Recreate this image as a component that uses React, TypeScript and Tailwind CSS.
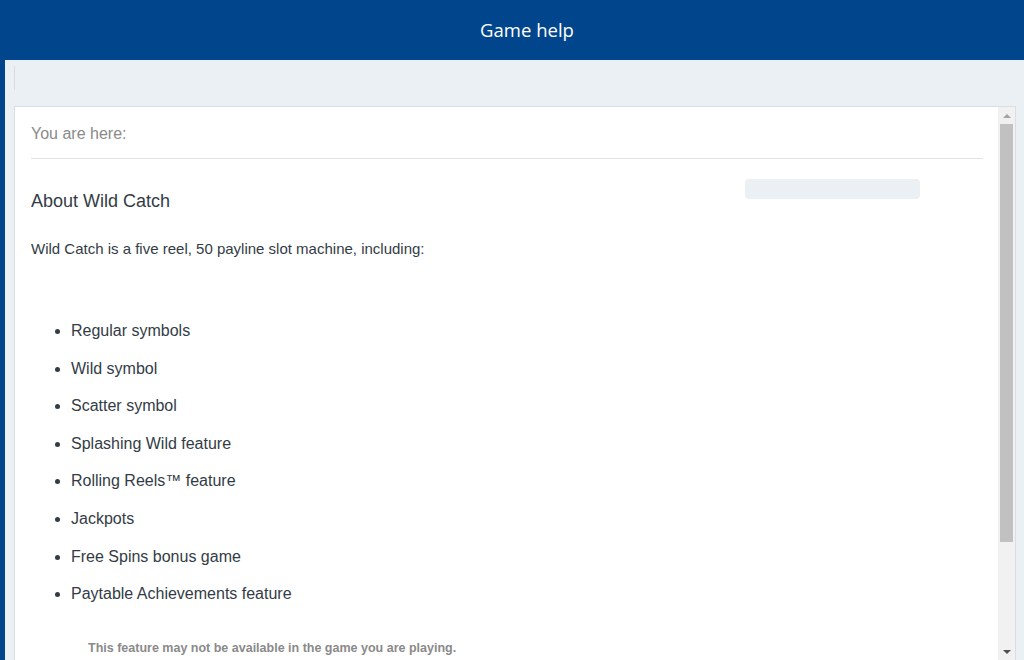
const features = [
  'Regular symbols',
  'Wild symbol',
  'Scatter symbol',
  'Splashing Wild feature',
  'Rolling Reels™ feature',
  'Jackpots',
  'Free Spins bonus game',
  'Paytable Achievements feature',
];

function Scrollbar() {
  return (
    <div className="flex w-[17px] shrink-0 flex-col bg-[#f1f1f1]">
      <div className="flex h-[17px] items-center justify-center">
        <div className="h-0 w-0 border-x-[4px] border-b-[4px] border-x-transparent border-b-[#a3a3a3]" />
      </div>
      <div className="mx-[2px] h-[418px] bg-[#c1c1c1]" />
      <div className="flex-1" />
      <div className="flex h-[17px] items-center justify-center">
        <div className="h-0 w-0 border-x-[4px] border-t-[4px] border-x-transparent border-t-[#505050]" />
      </div>
    </div>
  );
}

export default function App() {
  return (
    <div className="flex h-[660px] w-[1024px] flex-col overflow-hidden font-['Liberation_Sans',Arial,sans-serif]">
      <header className="flex h-[60px] shrink-0 items-center justify-center bg-[#01468c] pl-[30px]">
        <h1 className="font-['Open_Sans',sans-serif] text-[18.5px] text-white">Game help</h1>
      </header>
      <div className="flex flex-1 min-h-0">
        <div className="w-[5px] shrink-0 bg-[#01468c]" />
        <div className="flex min-w-0 flex-1 flex-col bg-[#ebf0f4] pl-[9px] pr-[8px]">
          <div className="h-[46px] shrink-0 pt-[6px]">
            <div className="h-[24px] w-px bg-[#d9dde0]" />
          </div>
          <div className="flex min-h-0 flex-1 border-l border-t border-r border-[#dadee2] bg-white">
            <div className="min-w-0 flex-1 pl-[16px] pr-[15px] text-[#333c46]">
              <p className="pt-[15px] text-[16px] leading-[24px] text-[#8a8a8a]">You are here:</p>
              <div className="mt-[12px] h-px bg-[#e2e2e2]" />
              <div className="mt-[20px] flex items-start justify-between">
                <h2 className="mt-[9px] text-[18px] leading-[26px]">About Wild Catch</h2>
                <div className="mr-[63px] h-[20px] w-[175px] rounded-[4px] bg-[#ebf0f4]" />
              </div>
              <p className="mt-[24px] text-[15px] leading-[22px]">
                Wild Catch is a five reel, 50 payline slot machine, including:
              </p>
              <ul className="mt-[52px] list-disc pl-[40px] text-[16px] leading-[37.6px]">
                {features.map((f) => (
                  <li key={f}>{f}</li>
                ))}
              </ul>
              <p className="mt-[26px] pl-[57px] text-[12.5px] font-bold leading-[18px] text-[#8a8a8a]">
                This feature may not be available in the game you are playing.
              </p>
            </div>
            <Scrollbar />
          </div>
        </div>
      </div>
    </div>
  );
}
